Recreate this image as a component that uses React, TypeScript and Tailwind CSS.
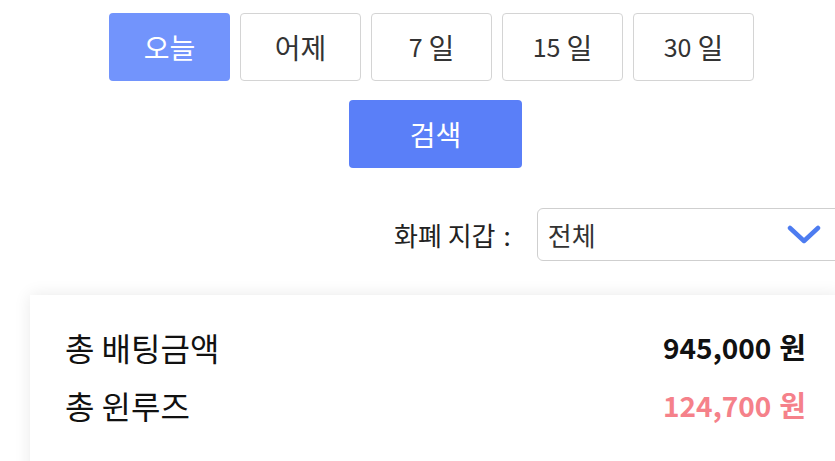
import { useState } from 'react';

const periods = [
  { num: '', label: '오늘' },
  { num: '', label: '어제' },
  { num: '7', label: '일' },
  { num: '15', label: '일' },
  { num: '30', label: '일' },
];

const font = { fontFamily: '"Noto Sans CJK KR", "Noto Sans", sans-serif' };

export default function App() {
  const [active, setActive] = useState(0);

  return (
    <div className="w-[835px] h-[461px] overflow-hidden bg-white" style={font}>
      <div className="flex gap-[10px] ml-[109px] pt-[13px]">
        {periods.map((p, i) => (
          <button
            key={p.num + p.label}
            onClick={() => setActive(i)}
            className={
              i === active
                ? 'w-[121px] h-[68px] rounded-[4px] bg-[#7294fc] text-white text-[28px] shrink-0 flex items-center justify-center'
                : 'w-[121px] h-[68px] rounded-[4px] border border-[#d4d4d4] bg-white text-[#333] text-[28px] shrink-0 flex items-center justify-center'
            }
          >
            {p.num && <span className="text-[25px] mr-[6px]">{p.num}</span>}
            <span>{p.label}</span>
          </button>
        ))}
      </div>

      <button className="ml-[349px] mt-[19px] w-[173px] h-[68px] rounded-[4px] bg-[#5a7ff8] text-white text-[28px]">
        검색
      </button>

      <div className="flex items-center mt-[40px] ml-[394px]">
        <span className="text-[26px] text-[#222] whitespace-nowrap">
          화폐 지갑<span className="ml-[8px]">:</span>
        </span>
        <div className="ml-[26px] w-[320px] h-[53px] shrink-0 border border-[#cfcfcf] rounded-[6px] flex items-center pl-[10px]">
          <span className="text-[26px] text-[#333] flex-1">전체</span>
          <svg width="34" height="20" viewBox="0 0 34 20" className="mr-[35px]">
            <path d="M3 3 L17 16 L31 3" fill="none" stroke="#4d7cf0" strokeWidth="4.5" strokeLinecap="round" strokeLinejoin="round" />
          </svg>
        </div>
      </div>

      <div className="ml-[30px] mt-[34px] w-[810px] h-[200px] bg-white shadow-[0_0_16px_rgba(0,0,0,0.09)] pl-[35px] pr-[34px] pt-[32px] flex flex-col gap-[18px]">
        <div className="flex items-center justify-between h-[40px]">
          <span className="text-[32px] text-[#111]">총 배팅금액</span>
          <span className="font-bold text-[#111] flex items-baseline">
            <span className="text-[28px]">945,000</span>
            <span className="text-[29px] ml-[8px]">원</span>
          </span>
        </div>
        <div className="flex items-center justify-between h-[40px]">
          <span className="text-[32px] text-[#111]">총 윈루즈</span>
          <span className="font-bold text-[#f5818a] flex items-baseline">
            <span className="text-[28px]">124,700</span>
            <span className="text-[29px] ml-[8px]">원</span>
          </span>
        </div>
      </div>
    </div>
  );
}
